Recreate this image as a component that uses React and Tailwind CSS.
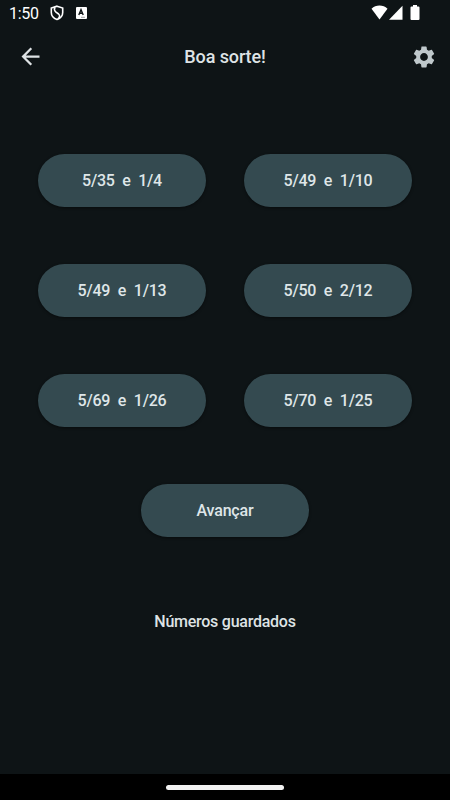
import React from "react";
import { MdArrowBack, MdSettings } from "react-icons/md";

const combinations = [
  "5/35  e  1/4",
  "5/49  e  1/10",
  "5/49  e  1/13",
  "5/50  e  2/12",
  "5/69  e  1/26",
  "5/70  e  1/25",
];

const PillButton = ({ children, className = "" }) => (
  <button
    type="button"
    className={`h-[53px] w-[167.5px] rounded-full bg-[#344a50] pt-px text-[16px] font-medium tracking-[-0.2px] whitespace-pre text-[#dfe6e8] shadow-[0_1px_3px_rgba(0,0,0,0.45)] ${className}`}
  >
    {children}
  </button>
);

const StatusBar = () => (
  <div className="flex h-7 items-start justify-between pt-[5px] pr-[30px] pl-[9px] text-white">
    <div className="flex items-start">
      <span className="w-[41px] text-[16px] leading-[18px] tracking-[-0.3px]">1:50</span>
      {/* Shield */}
      <svg className="h-4 w-[14px]" viewBox="0 0 14 16" fill="none" stroke="currentColor">
        <path d="M7 1.2 12.700 3v4.400c0 3.200-2.400 5.800-5.700 7.100-3.300-1.300-5.700-3.900-5.700-7.100V3z" strokeWidth="1.6" />
        <path d="M5 2.200C3.800 4.200 4.300 5.600 6 7.100L8.600 9c1.500 1.300 1.300 3.200-.6 4.800" strokeWidth="1.6" />
      </svg>
      {/* Keyboard badge */}
      <span className="mt-[2px] ml-[11.5px] flex h-3 w-[11px] justify-center rounded-[1px] bg-white">
        <svg className="h-3 w-[10px]" viewBox="0 0 10 12" fill="none" stroke="#0e1416">
          <path d="M2.800 8 5 2.600 7.200 8M3.600 6.300h2.800" strokeWidth="1.4" />
          <path d="M5.500 10.300h1M7.500 10.300h1" strokeWidth="0.8" />
        </svg>
      </span>
    </div>
    <div className="flex items-start">
      <svg className="h-[15px] w-[17px]" viewBox="0 0 17 15" fill="currentColor">
        <path d="M8.500 14.500.5 3.700C2.700 1.700 5.500.6 8.500.6s5.800 1.100 8 3.100z" />
      </svg>
      <svg className="ml-px h-[15px] w-[14px]" viewBox="0 0 14 15" fill="currentColor">
        <path d="M0 14.700 13.500.7v14z" />
      </svg>
      <svg className="ml-[7px] h-[15px] w-[10px]" viewBox="0 0 10 15" fill="currentColor">
        <path d="M3 0h4v1.500h1.500q1 0 1 1V14q0 1-1 1h-7q-1 0-1-1V2.500q0-1 1-1H3z" />
      </svg>
    </div>
  </div>
);

const App = () => {
  return (
    <div className="flex h-[800px] w-[450px] flex-col overflow-hidden bg-[#0e1416] font-[Roboto,sans-serif]">
      <StatusBar />

      <header className="grid h-[58px] grid-cols-[1fr_auto_1fr] items-center pr-[13px] pl-[17px]">
        <button type="button" aria-label="Voltar" className="justify-self-start pb-px text-[#dee3e5]">
          <MdArrowBack className="size-[27px]" />
        </button>
        <h1 className="-ml-[4px] pb-[2px] text-[18px] font-medium tracking-[-0.1px] text-[#dee3e5]">Boa sorte!</h1>
        <button type="button" aria-label="Definições" className="justify-self-end text-[#bfc8cb]">
          <MdSettings className="size-[26px]" />
        </button>
      </header>

      <main className="flex flex-1 flex-col items-center pt-[68px]">
        <div className="grid grid-cols-2 gap-x-[38.5px] gap-y-[57px]">
          {combinations.map((item) => (
            <PillButton key={item}>{item}</PillButton>
          ))}
        </div>
        <PillButton className="mt-[57px]">Avançar</PillButton>
        <button
          type="button"
          className="mt-[73px] text-[16px] leading-6 font-medium tracking-[-0.25px] text-[#dee3e5]"
        >
          Números guardados
        </button>
      </main>

      {/* Gesture bar */}
      <div className="flex h-[26px] items-center justify-center bg-black">
        <div className="h-[5px] w-[118px] rounded-full bg-[#f2f2f2]" />
      </div>
    </div>
  );
};

export default App;
